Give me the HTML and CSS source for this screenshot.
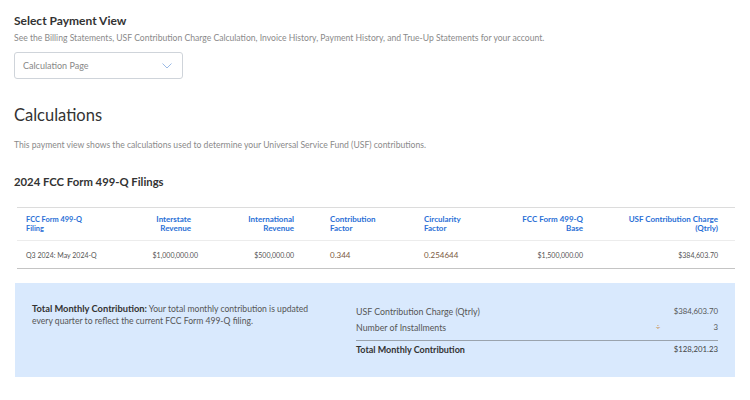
FILE: index.html
```html
<!DOCTYPE html>
<html lang="en">
<head>
<meta charset="utf-8">
<title>Calculations</title>
<link rel="stylesheet" href="styles.css">
</head>
<body>
<main class="page">
  <section class="view-select">
    <h2 class="view-title">Select Payment View</h2>
    <p class="view-sub">See the Billing Statements, USF Contribution Charge Calculation, Invoice History, Payment History, and True-Up Statements for your account.</p>
    <div class="select">
      <span class="select-text">Calculation Page</span>
      <svg class="chev" width="10" height="6" viewBox="0 0 10 6"><path d="M0.5 0.5 L5 5 L9.5 0.5" fill="none" stroke="#9cbbe6" stroke-width="1"/></svg>
    </div>
  </section>

  <h1 class="calc-title">Calculations</h1>
  <p class="calc-desc">This payment view shows the calculations used to determine your Universal Service Fund (USF) contributions.</p>

  <h3 class="filings-title">2024 FCC Form 499-Q Filings</h3>

  <table class="filings">
    <colgroup>
      <col class="w1"><col class="w2"><col class="w3"><col class="w4"><col class="w5"><col class="w6"><col class="w7">
    </colgroup>
    <thead>
      <tr>
        <th class="c1">FCC Form 499-Q<br>Filing</th>
        <th class="r c2h">Interstate<br>Revenue</th>
        <th class="r">International<br>Revenue</th>
        <th class="c4">Contribution<br>Factor</th>
        <th class="l">Circularity<br>Factor</th>
        <th class="r">FCC Form 499-Q<br>Base</th>
        <th class="r c7">USF Contribution Charge<br>(Qtrly)</th>
      </tr>
    </thead>
    <tbody>
      <tr>
        <td class="c1 t-filing">Q3 2024: May 2024-Q</td>
        <td class="r num">$1,000,000.00</td>
        <td class="r num">$500,000.00</td>
        <td class="c4 factor">0.344</td>
        <td class="l factor">0.254644</td>
        <td class="r num">$1,500,000.00</td>
        <td class="r c7 num">$384,603.70</td>
      </tr>
    </tbody>
  </table>

  <section class="summary">
    <p class="summary-note"><span class="note-line"><strong>Total Monthly Contribution:</strong> <span>Your total monthly contribution is updated</span></span><span class="note-line">every quarter to reflect the current FCC Form 499-Q filing.</span></p>
    <div class="summary-calc">
      <div class="calc-row"><span class="lbl">USF Contribution Charge (Qtrly)</span><span class="op"></span><span class="val">$384,603.70</span></div>
      <div class="calc-row"><span class="lbl">Number of Installments</span><span class="op">÷</span><span class="val">3</span></div>
      <div class="calc-row total"><span class="lbl">Total Monthly Contribution</span><span class="op"></span><span class="val">$128,201.23</span></div>
    </div>
  </section>
</main>
</body>
</html>
```
FILE: styles.css
```css
* { box-sizing: border-box; }
html, body { margin: 0; padding: 0; background: #fff; }
body {
  font-family: "Lato", "Liberation Sans", sans-serif;
  color: #333;
}
.page { padding: 13px 15px 0 14px; }

.view-title {
  margin: 0;
  font-size: 12px;
  line-height: 15px;
  font-weight: 700;
  color: #333;
}
.view-sub {
  margin: 4px 0 0;
  font-size: 8.6px;
  line-height: 12px;
  color: #8a8a8a;
}
.select {
  margin-top: 8px;
  width: 169px;
  height: 27px;
  border: 1px solid #cfd4da;
  border-radius: 3px;
  display: flex;
  align-items: center;
  justify-content: space-between;
  padding: 0 9px 0 8px;
}
.select-text { font-size: 9px; color: #888; }
.chev { display: block; margin-right: 1px; }

.calc-title {
  margin: 26px 0 0;
  font-size: 16.5px;
  line-height: 20px;
  font-weight: 400;
  color: #333;
}
.calc-desc {
  margin: 14px 0 0;
  font-size: 8.6px;
  line-height: 12px;
  color: #8a8a8a;
}
.filings-title {
  margin: 23px 0 0;
  font-size: 11.3px;
  line-height: 15px;
  font-weight: 700;
  color: #333;
}

.filings {
  margin: 18px 0 0 3px;
  width: 718px;
  border-collapse: collapse;
  table-layout: fixed;
  font-size: 8px;
}
.w1 { width: 114px; }
.w2 { width: 67px; }
.w3 { width: 96px; }
.w4 { width: 130px; }
.w5 { width: 79px; }
.w6 { width: 80px; }
.w7 { width: 152px; }
.filings thead tr { border-top: 1px solid #dcdcdc; border-bottom: 1px solid #ececec; }
.filings tbody tr { border-bottom: 1px solid #c4c4c4; }
.filings th {
  height: 33px;
  padding: 0;
  font-weight: 700;
  line-height: 9.5px;
  color: #2a6fd6;
  vertical-align: middle;
}
.filings th.c1 { font-size: 7.4px; }
.filings td {
  height: 28px;
  padding: 0;
  color: #555;
  vertical-align: middle;
}
.filings .l { text-align: left; }
.filings .r { text-align: right; }
.filings .c1 { text-align: left; padding-left: 9px; }
.filings .c2h { padding-right: 7px; }
.filings .c4 { text-align: left; padding-left: 36px; }
.filings .c7 { padding-right: 17px; }
.filings .t-filing { font-size: 7px; }
.filings .num { font-size: 7px; }
.filings .factor { color: #7a5a3e; }

.summary {
  margin: 14px 0 0 1px;
  width: 720px;
  height: 94px;
  background: #d9e9fd;
  display: flex;
  padding: 20px 17px 0 17px;
  gap: 41px;
}
.summary-note {
  margin: 0;
  width: 283px;
  font-size: 8.6px;
  line-height: 12px;
  color: #555;
}
.note-line { display: block; white-space: nowrap; }
.summary-note strong { color: #333; font-weight: 700; font-size: 9.3px; }
.summary-calc { flex: 1; }
.calc-row {
  display: flex;
  align-items: center;
  height: 16px;
  font-size: 8.8px;
  color: #555;
}
.calc-row .lbl { flex: 1; }
.calc-row .op { width: 10px; text-align: center; color: #c98a4a; font-size: 8px; }
.calc-row .val { width: 55px; text-align: right; font-size: 7.8px; }
.calc-row.total {
  border-top: 1px solid #9aa3ad;
  margin-top: 5px;
  height: 17px;
  color: #333;
  font-weight: 700;
  font-size: 9px;
}
.calc-row.total .val { font-weight: 400; color: #444; }
```
